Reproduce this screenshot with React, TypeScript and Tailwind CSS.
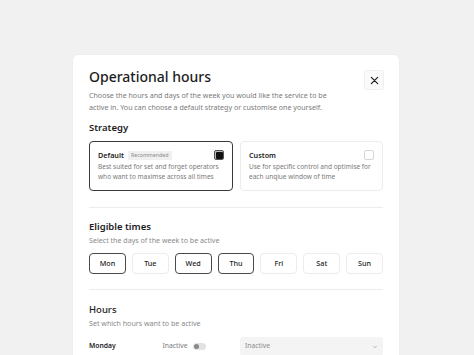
import React from "react";

const days = [
  { d: "Mon", on: true },
  { d: "Tue", on: false },
  { d: "Wed", on: true },
  { d: "Thu", on: true },
  { d: "Fri", on: false },
  { d: "Sat", on: false },
  { d: "Sun", on: false },
];

export default function App() {
  return (
    <div
      className="w-[474px] h-[355px] overflow-hidden bg-[#f1f1f1] pt-[55px] pl-[73px]"
      style={{ fontFamily: '"Noto Sans", "Open Sans", sans-serif' }}
    >
      <div className="w-[326px] h-[320px] bg-white rounded-[5px] px-[16px] pt-[13px] shadow-[0_0_2px_rgba(0,0,0,0.05)]">
        <div className="flex items-start justify-between">
          <div className="text-[14px] leading-[18px] font-medium text-[#1c1c1c]">Operational hours</div>
          <button className="w-[20px] h-[20px] mt-[2px] -mr-[1px] flex items-center justify-center rounded-[3px] bg-[#fafafa] border border-[#f0f0f0]">
            <svg width="9" height="9" viewBox="0 0 10 10">
              <path d="M1.5 1.5 L8.5 8.5 M8.5 1.5 L1.5 8.5" stroke="#222" strokeWidth="1.4" strokeLinecap="round" />
            </svg>
          </button>
        </div>
        <p className="-mt-[1px] text-[7.1px] leading-[12px] text-[#7a7a7a] w-[250px]">
          Choose the hours and days of the week you would like the service to be active in. You can choose a default strategy or customise one yourself.
        </p>
        <div className="mt-[9px] text-[9.5px] leading-[12px] font-semibold text-[#1c1c1c]">Strategy</div>
        <div className="mt-[7px] flex gap-[7px]">
          <div className="w-[145px] h-[50px] rounded-[4px] border-[1.5px] border-[#3a3a3a] px-[8px] pt-[8px]">
            <div className="flex items-center justify-between">
              <div className="flex items-center gap-[4px]">
                <span className="text-[7.2px] font-semibold text-[#1c1c1c] leading-[10px]">Default</span>
                <span className="text-[5.3px] leading-[9px] px-[3px] bg-[#f0f0f0] text-[#8a8a8a] rounded-[1px]">Recommended</span>
              </div>
              <div className="w-[10px] h-[10px] rounded-[2px] border border-[#555] flex items-center justify-center bg-[#bbb]">
                <div className="w-[7px] h-[7px] bg-[#111] rounded-[1px]" />
              </div>
            </div>
            <div className="mt-[2px] text-[6.5px] leading-[10px] text-[#7a7a7a]">
              Best suited for set and forget operators who want to maximse across all times
            </div>
          </div>
          <div className="w-[144px] h-[50px] rounded-[4px] border border-[#ececec] px-[8px] pt-[8px]">
            <div className="flex items-center justify-between">
              <span className="text-[7.2px] font-semibold text-[#1c1c1c] leading-[10px]">Custom</span>
              <div className="w-[10px] h-[10px] rounded-[2px] border border-[#d6d6d6] bg-white" />
            </div>
            <div className="mt-[2px] text-[6.5px] leading-[10px] text-[#7a7a7a]">
              Use for specific control and optimise for each unqiue window of time
            </div>
          </div>
        </div>
        <div className="mt-[16px] h-px bg-[#ececec]" />
        <div className="mt-[13px] text-[9.5px] leading-[12px] font-semibold text-[#1c1c1c]">Eligible times</div>
        <div className="mt-[1px] text-[7.1px] leading-[12px] text-[#8a8a8a]">Select the days of the week to be active</div>
        <div className="mt-[7px] flex gap-[6px]">
          {days.map((x) => (
            <div
              key={x.d}
              className={
                x.on
                  ? "w-[37px] h-[21px] rounded-[4px] border-[1.5px] border-[#4a4a4a] flex items-center justify-center text-[7.2px] font-medium text-[#1c1c1c]"
                  : "w-[37px] h-[21px] rounded-[4px] border border-[#ececec] flex items-center justify-center text-[7.2px] font-medium text-[#1c1c1c]"
              }
            >
              {x.d}
            </div>
          ))}
        </div>
        <div className="mt-[15px] h-px bg-[#ececec]" />
        <div className="mt-[14px] text-[9.5px] leading-[12px] font-medium text-[#1c1c1c]">Hours</div>
        <div className="mt-[1px] text-[7.1px] leading-[12px] text-[#8a8a8a]">Set which hours want to be active</div>
        <div className="mt-[8px] flex items-center">
          <div className="w-[74px] text-[6.8px] font-semibold text-[#1c1c1c]">Monday</div>
          <div className="w-[78px] flex items-center gap-[5px]">
            <span className="text-[6.8px] text-[#7a7a7a]">Inactive</span>
            <div className="w-[13px] h-[7px] rounded-full bg-[#e2e2e2] flex items-center px-[1px]">
              <div className="w-[5px] h-[5px] rounded-full bg-[#888]" />
            </div>
          </div>
          <div className="w-[144px] h-[19px] bg-[#f4f4f4] rounded-[3px] flex items-center justify-between px-[5px]">
            <span className="text-[6.8px] text-[#8a8a8a]">Inactive</span>
            <svg width="6" height="6" viewBox="0 0 6 6">
              <path d="M1.5 2.2 L3 3.7 L4.5 2.2" stroke="#999" strokeWidth="0.8" fill="none" />
            </svg>
          </div>
        </div>
      </div>
    </div>
  );
}
